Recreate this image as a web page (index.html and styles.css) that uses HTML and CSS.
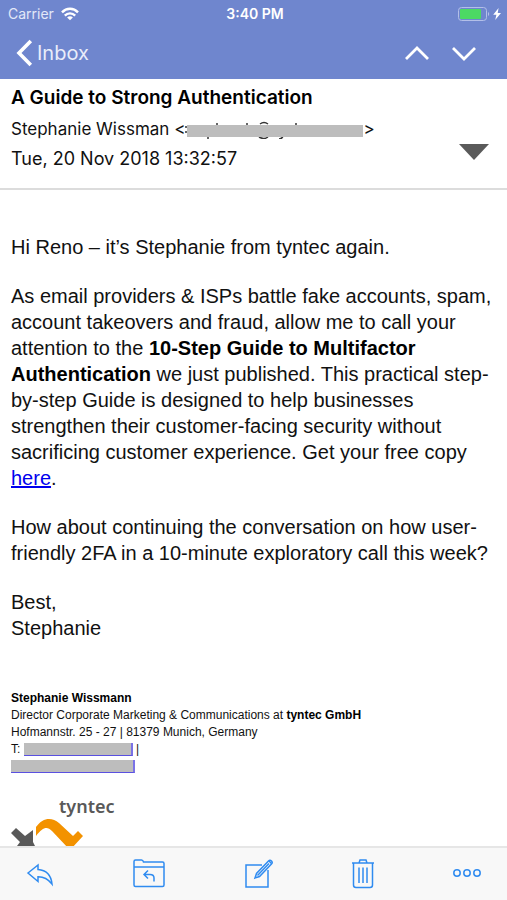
FILE: index.html
```html
<!DOCTYPE html>
<html lang="en">
<head>
    <meta charset="UTF-8">
    <meta name="viewport" content="width=device-width, initial-scale=1.0">
    <title>Inbox</title>
    <link rel="stylesheet" href="styles.css">
</head>
<body>
    <div class="app">
        <header class="topbar">
            <!-- Status Bar -->
            <div class="status">
                <div class="carrier">
                    <span>Carrier</span>
                    <svg width="18" height="14" viewBox="0 0 18 14" fill="none" stroke="#fff" stroke-width="2.4">
                        <path d="M1 5.3 C5.5 0.6 12.5 0.6 17 5.3"/>
                        <path d="M3.8 8.6 C6.8 5.6 11.2 5.6 14.2 8.6"/>
                        <path d="M9 13.2 L6.1 10.4 C7.8 8.8 10.2 8.8 11.9 10.4 Z" fill="#fff" stroke="none"/>
                    </svg>
                </div>
                <span class="clock">3:40 PM</span>
                <div class="battery">
                    <svg width="44" height="14" viewBox="0 0 44 14">
                        <rect x="0.5" y="0.5" width="28" height="13" rx="3" fill="none" stroke="#b3bfe8"/>
                        <rect x="2" y="2" width="21" height="10" rx="1" fill="#4cd964"/>
                        <path d="M30 5 C31.6 5.5 31.6 8.5 30 9 Z" fill="#b3bfe8"/>
                        <path d="M40.6 1 L35.2 7.8 H38.4 L37.2 13 L43 6 H39.7 Z" fill="#fff"/>
                    </svg>
                </div>
            </div>

            <!-- Navigation -->
            <nav class="nav">
                <button class="back">
                    <svg width="17" height="28" viewBox="0 0 17 28" fill="none" stroke="#fff" stroke-width="3.6">
                        <path d="M14.8 2 L3 14 L14.8 26"/>
                    </svg>
                    Inbox
                </button>
                <div class="arrows">
                    <button class="arrow" aria-label="Previous message">
                        <svg width="26" height="16" viewBox="0 0 26 16" fill="none" stroke="#fff" stroke-width="2.8">
                            <path d="M2 14 L13 3 L24 14"/>
                        </svg>
                    </button>
                    <button class="arrow" aria-label="Next message">
                        <svg width="26" height="16" viewBox="0 0 26 16" fill="none" stroke="#fff" stroke-width="2.8">
                            <path d="M2 3 L13 14 L24 3"/>
                        </svg>
                    </button>
                </div>
            </nav>
        </header>

        <!-- Message Header -->
        <section class="message-head">
            <div>
                <h1 class="subject">A Guide to Strong Authentication</h1>
                <p class="meta sender">Stephanie Wissman &lt;<svg class="hidden-address" width="178" height="18" viewBox="0 0 178 18">
                    <path d="M0 6 h2 M0 11 h2 M23 15 v3 M32 2 v2 M62 2 v2 M75 3 q4 -3 8 0 M74 16 q5 3 9 0 M94 18 q3 0 4 -3 M111 2 v2" fill="none" stroke="#333" stroke-width="1.5"/>
                    <rect x="2" y="4" width="176" height="12" fill="#bdbdbd"/>
                </svg>&gt;</p>
                <p class="meta date">Tue, 20 Nov 2018 13:32:57</p>
            </div>
            <button class="details" aria-label="Show details">
                <svg width="30" height="16" viewBox="0 0 30 16">
                    <path d="M0 0 H30 L15 16 Z" fill="#5a5a5a"/>
                </svg>
            </button>
        </section>

        <!-- Message Body -->
        <main class="message">
            <div class="text">
                <p>Hi Reno – it’s Stephanie from tyntec again.</p>
                <p>As email providers &amp; ISPs battle fake accounts, spam, account takeovers and fraud, allow me to call your attention to the <b>10-Step Guide to Multifactor Authentication</b> we just published. This practical step-by-step Guide is designed to help businesses strengthen their customer-facing security without sacrificing customer experience. Get your free copy <a href="#">here</a>.</p>
                <p>How about continuing the conversation on how user-friendly 2FA in a 10-minute exploratory call this week?</p>
                <p>Best,<br>Stephanie</p>
            </div>

            <div class="signature">
                <b>Stephanie Wissmann</b><br>
                Director Corporate Marketing &amp; Communications at <b>tyntec GmbH</b><br>
                Hofmannstr. 25 - 27 | 81379 Munich, Germany<br>
                T: <a class="masked phone" href="#" aria-label="Phone"></a> |<br>
                <a class="masked mail" href="#" aria-label="Email"></a>
            </div>

            <div class="logo">
                <span class="logo-name">tyntec</span>
                <svg width="74" height="40" viewBox="0 0 74 40">
                    <path d="M0 15 L5 10 L14 18 L22 12 V24 L24 28 V40 H6 V28 L9 24 Z" fill="#595959"/>
                    <path d="M25 18 V9 C32 -1 41 -1 48 5 L62 18 L67 13 L72 18 L60 31 H58 L41 13 C36 8 32 9 25 18 Z" fill="#f39200"/>
                </svg>
            </div>
        </main>

        <!-- Toolbar -->
        <footer class="toolbar">
            <button class="tool" aria-label="Reply">
                <svg width="28" height="30" viewBox="0 0 28 30">
                    <path d="M2 14 L12 6 V10.5 C20 11 25 16 26 25 C22 20 18 17.7 12 17.8 V22.5 Z"/>
                </svg>
            </button>
            <button class="tool" aria-label="Move to folder">
                <svg width="32" height="30" viewBox="0 0 32 30">
                    <path d="M1 26 V2.5 Q1 1 2.5 1 H8.5 Q10 1 10.5 3 H29.5 Q31 3 31 4.5 V26 Q31 27.5 29.5 27.5 H2.5 Q1 27.5 1 26 M1 8 H31"/>
                    <path d="M15 11.5 L11 15.5 L15 19.5 M11 15.5 H17 Q21 15.5 21 19 V22.5"/>
                </svg>
            </button>
            <button class="tool" aria-label="Compose">
                <svg width="28" height="30" viewBox="0 0 28 30">
                    <path d="M17 6 H1 V28 H23 V11"/>
                    <path d="M10 19 L11.5 14.5 L23.5 2 Q25 0.5 26.5 2 Q28 3.5 26.5 5 L14.5 17.5 Z M12.5 16.5 L24 4.5"/>
                    <path d="M24 2 L26.5 4.5"/>
                </svg>
            </button>
            <button class="tool" aria-label="Delete">
                <svg width="22" height="30" viewBox="0 0 22 30">
                    <path d="M0 4 H22 M7 4 L8 1 H14 L15 4 M1.5 4 V26 Q1.5 28.5 4 28.5 H18 Q20.5 28.5 20.5 26 V4 M7 8.5 V24 M11 8.5 V24 M15 8.5 V24"/>
                </svg>
            </button>
            <button class="tool" aria-label="More">
                <svg width="28" height="30" viewBox="0 0 28 30">
                    <circle cx="4" cy="14" r="3.2"/>
                    <circle cx="14" cy="14" r="3.2"/>
                    <circle cx="24" cy="14" r="3.2"/>
                </svg>
            </button>
        </footer>
    </div>
</body>
</html>
```
FILE: styles.css
```css
/* General Styles */
* {
    box-sizing: border-box;
}

body {
    margin: 0;
    background: #fff;
    color: #111;
    font-family: "Liberation Sans", Arial, sans-serif;
}

h1,
p {
    margin: 0;
}

svg {
    display: block;
}

button {
    padding: 0;
    border: none;
    background: none;
    cursor: pointer;
}

a {
    color: #0000ee;
}

.app {
    display: flex;
    flex-direction: column;
    height: 100vh;
}

/* Top Bar */
.topbar {
    background: #6f86ce;
    color: #fff;
    font-family: Inter, sans-serif;
}

.status {
    display: grid;
    grid-template-columns: 1fr auto 1fr;
    align-items: center;
    height: 27px;
    padding: 0 5px 0 8px;
    font-size: 14px;
}

.carrier {
    display: flex;
    align-items: center;
    gap: 7px;
    color: #e3e8f8;
}

.clock {
    font-weight: 600;
}

.battery {
    justify-self: end;
}

.nav {
    display: flex;
    justify-content: space-between;
    align-items: center;
    height: 52px;
    padding: 0 30px 0 16px;
}

.back {
    display: flex;
    align-items: center;
    gap: 4px;
    color: #e9edfa;
    font-family: inherit;
    font-size: 20px;
}

.arrows {
    display: flex;
    gap: 21px;
}

/* Message Header */
.message-head {
    display: flex;
    justify-content: space-between;
    padding: 4px 18px 15px 11px;
    border-bottom: 2px solid #dcdcdc;
    font-family: Inter, sans-serif;
}

.subject {
    margin-bottom: 3px;
    color: #000;
    font-size: 19px;
    font-weight: 600;
    line-height: 29px;
}

.meta {
    line-height: 29px;
}

.sender {
    font-size: 17px;
}

.date {
    font-size: 18px;
}

.hidden-address {
    display: inline-block;
    vertical-align: middle;
}

.details {
    align-self: flex-end;
    margin-bottom: 13px;
}

/* Message Body */
.message {
    flex: 1;
    min-height: 0;
    padding: 44px 11px 0;
    overflow: hidden;
}

.text {
    display: flex;
    flex-direction: column;
    gap: 23px;
    font-size: 20px;
    line-height: 26px;
}

.text b,
.signature b {
    color: #000;
}

.signature {
    margin-top: 49px;
    font-size: 12px;
    line-height: 17px;
}

.masked {
    display: inline-block;
    height: 13px;
    border-bottom: 1px solid #5a50e0;
    border-right: 2px solid #7a72e6;
    background: #bdbdbd;
    vertical-align: middle;
}

.phone {
    width: 109px;
}

.mail {
    width: 124px;
}

/* Logo */
.logo {
    margin-top: 19px;
}

.logo-name {
    display: block;
    padding-left: 48px;
    color: #595959;
    font-family: "Noto Sans", sans-serif;
    font-size: 18px;
    font-weight: 600;
    line-height: 24px;
}

/* Toolbar */
.toolbar {
    display: flex;
    justify-content: space-between;
    align-items: center;
    height: 54px;
    padding: 0 26px;
    border-top: 2px solid #e6e6e6;
    background: #f8f8f8;
}

.tool svg {
    fill: none;
    stroke: #2f8bf0;
    stroke-width: 1.5;
}
```
